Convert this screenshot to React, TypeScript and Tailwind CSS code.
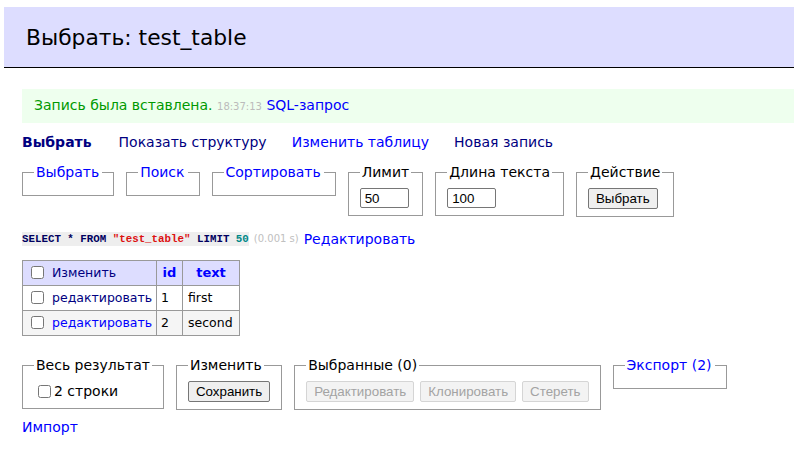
import React from "react";

const verdana = "font-['DejaVu_Sans',Verdana,sans-serif]";
const arial = "font-['Liberation_Sans',Arial,sans-serif]";

function Fieldset({ legend, link, children }: { legend: string; link?: boolean; children?: React.ReactNode }) {
  return (
    <fieldset className="border border-[#999] px-[11px] pt-[7px] pb-[7px]">
      <legend className={link ? "pl-[2px] pr-[3px]" : "px-[2px]"}>
        {link ? <a className="text-[#0000ff]">{legend}</a> : legend}
      </legend>
      {children}
    </fieldset>
  );
}

function Button({ children, disabled }: { children: React.ReactNode; disabled?: boolean }) {
  return (
    <button
      className={
        disabled
          ? `${arial} h-[21px] rounded-[2px] border border-[#d5d5d5] bg-[#f3f3f3] px-[7px] text-[13.33px] leading-none text-[#a3a3a3]`
          : `${arial} h-[21px] rounded-[2px] border border-[#767676] bg-[#efefef] px-[7px] text-[13.33px] leading-none text-black`
      }
    >
      {children}
    </button>
  );
}

function NumInput({ value }: { value: string }) {
  return (
    <input
      readOnly
      value={value}
      className={`${arial} block h-[20px] w-[49px] rounded-[2px] border border-[#767676] bg-white px-[4px] text-[13.33px] text-black`}
    />
  );
}

function Check() {
  return <input type="checkbox" className="ml-[4px] mr-[8px] h-[13px] w-[13px] align-[-2px]" />;
}

export default function App() {
  return (
    <div className={`${verdana} min-h-[453px] bg-white text-[14px] leading-[18px] text-black`}>

      {/* Title */}

      <div className="pt-[7px] pl-[4px]">
        <h2 className="border-b border-black bg-[#ddf] pt-[17px] pb-[16px] pl-[22px] text-[21.8px] leading-[27px] font-normal">
          Выбрать: test_table
        </h2>
      </div>

      <div className="pl-[22px]">

        {/* Message */}

        <div className="mt-[21px] bg-[#efe] px-[12px] py-[7px] text-[#090]">
          Запись была вставлена.{" "}
          <span className="text-[10px] text-[#bbb]">18:37:13</span>{" "}
          <a className="text-[#0000ff]">SQL-запрос</a>
        </div>

        {/* Links */}

        <p className="mt-[10px] flex gap-[25px]">
          <a className="mr-[2px] font-bold text-[#000080]">Выбрать</a>
          <a className="text-[#000080]">Показать структуру</a>
          <a className="text-[#0000ff]">Изменить таблицу</a>
          <a className="text-[#000080]">Новая запись</a>
        </p>

        {/* Select form */}

        <div className="mt-[12px] flex items-start gap-[12px]">
          <Fieldset legend="Выбрать" link />
          <Fieldset legend="Поиск" link />
          <Fieldset legend="Сортировать" link />
          <Fieldset legend="Лимит">
            <NumInput value="50" />
          </Fieldset>
          <Fieldset legend="Длина текста">
            <NumInput value="100" />
          </Fieldset>
          <Fieldset legend="Действие">
            <Button>Выбрать</Button>
          </Fieldset>
        </div>

        {/* Query */}

        <p className="mt-[13px] flex items-center gap-[5px]">
          <code className="bg-[#eee] font-['Liberation_Mono',monospace] text-[10.8px] leading-[14px] font-bold text-[#000060]">
            SELECT * FROM <span className="text-[#dd1111]">"test_table"</span> LIMIT{" "}
            <span className="text-[#008888]">50</span>
          </code>
          <span className="text-[10px] text-[#c0c0c0]">(0.001 s)</span>
          <a className="text-[#0000ff]">Редактировать</a>
        </p>

        {/* Table */}

        <table className="mt-[12px] w-[217px] table-fixed border-collapse text-[12.5px] leading-[16px]">
          <colgroup>
            <col className="w-[134px]" />
            <col className="w-[26px]" />
            <col className="w-[57px]" />
          </colgroup>
          <thead>
            <tr className="h-[25px] bg-[#ddf]">
              <td className="whitespace-nowrap border border-[#999] pl-[4px] text-left align-middle">
                <Check />
                <a className="text-[#000080]">Изменить</a>
              </td>
              <th className="border border-[#999] text-center text-[13px] font-bold">
                <a className="text-[#0000ff]">id</a>
              </th>
              <th className="border border-[#999] text-center text-[13px] font-bold">
                <a className="text-[#0000ff]">text</a>
              </th>
            </tr>
          </thead>
          <tbody>
            <tr className="h-[25px] bg-white">
              <td className="whitespace-nowrap border border-[#999] pl-[4px]">
                <Check />
                <a className="text-[#000080]">редактировать</a>
              </td>
              <td className="border border-[#999] px-[4px]">1</td>
              <td className="border border-[#999] px-[5px]">first</td>
            </tr>
            <tr className="h-[25px] bg-[#f5f5f5]">
              <td className="whitespace-nowrap border border-[#999] pl-[4px]">
                <Check />
                <a className="text-[#0000ff]">редактировать</a>
              </td>
              <td className="border border-[#999] px-[4px]">2</td>
              <td className="border border-[#999] px-[5px]">second</td>
            </tr>
          </tbody>
        </table>

        {/* Bottom forms */}

        <div className="mt-[20px] flex items-start gap-[12px]">
          <Fieldset legend="Весь результат">
            <label className="flex h-[20px] items-center">
              <input type="checkbox" className="ml-[4px] mr-[3px] h-[13px] w-[13px]" />
              2 строки
            </label>
          </Fieldset>
          <Fieldset legend="Изменить">
            <Button>Сохранить</Button>
          </Fieldset>
          <Fieldset legend="Выбранные (0)">
            <div className="flex gap-[6px]">
              <Button disabled>Редактировать</Button>
              <Button disabled>Клонировать</Button>
              <Button disabled>Стереть</Button>
            </div>
          </Fieldset>
          <Fieldset legend="Экспорт (2)" link />
        </div>

        <p className="mt-[8px]">
          <a className="text-[#0000ff]">Импорт</a>
        </p>

      </div>

    </div>
  );
}
